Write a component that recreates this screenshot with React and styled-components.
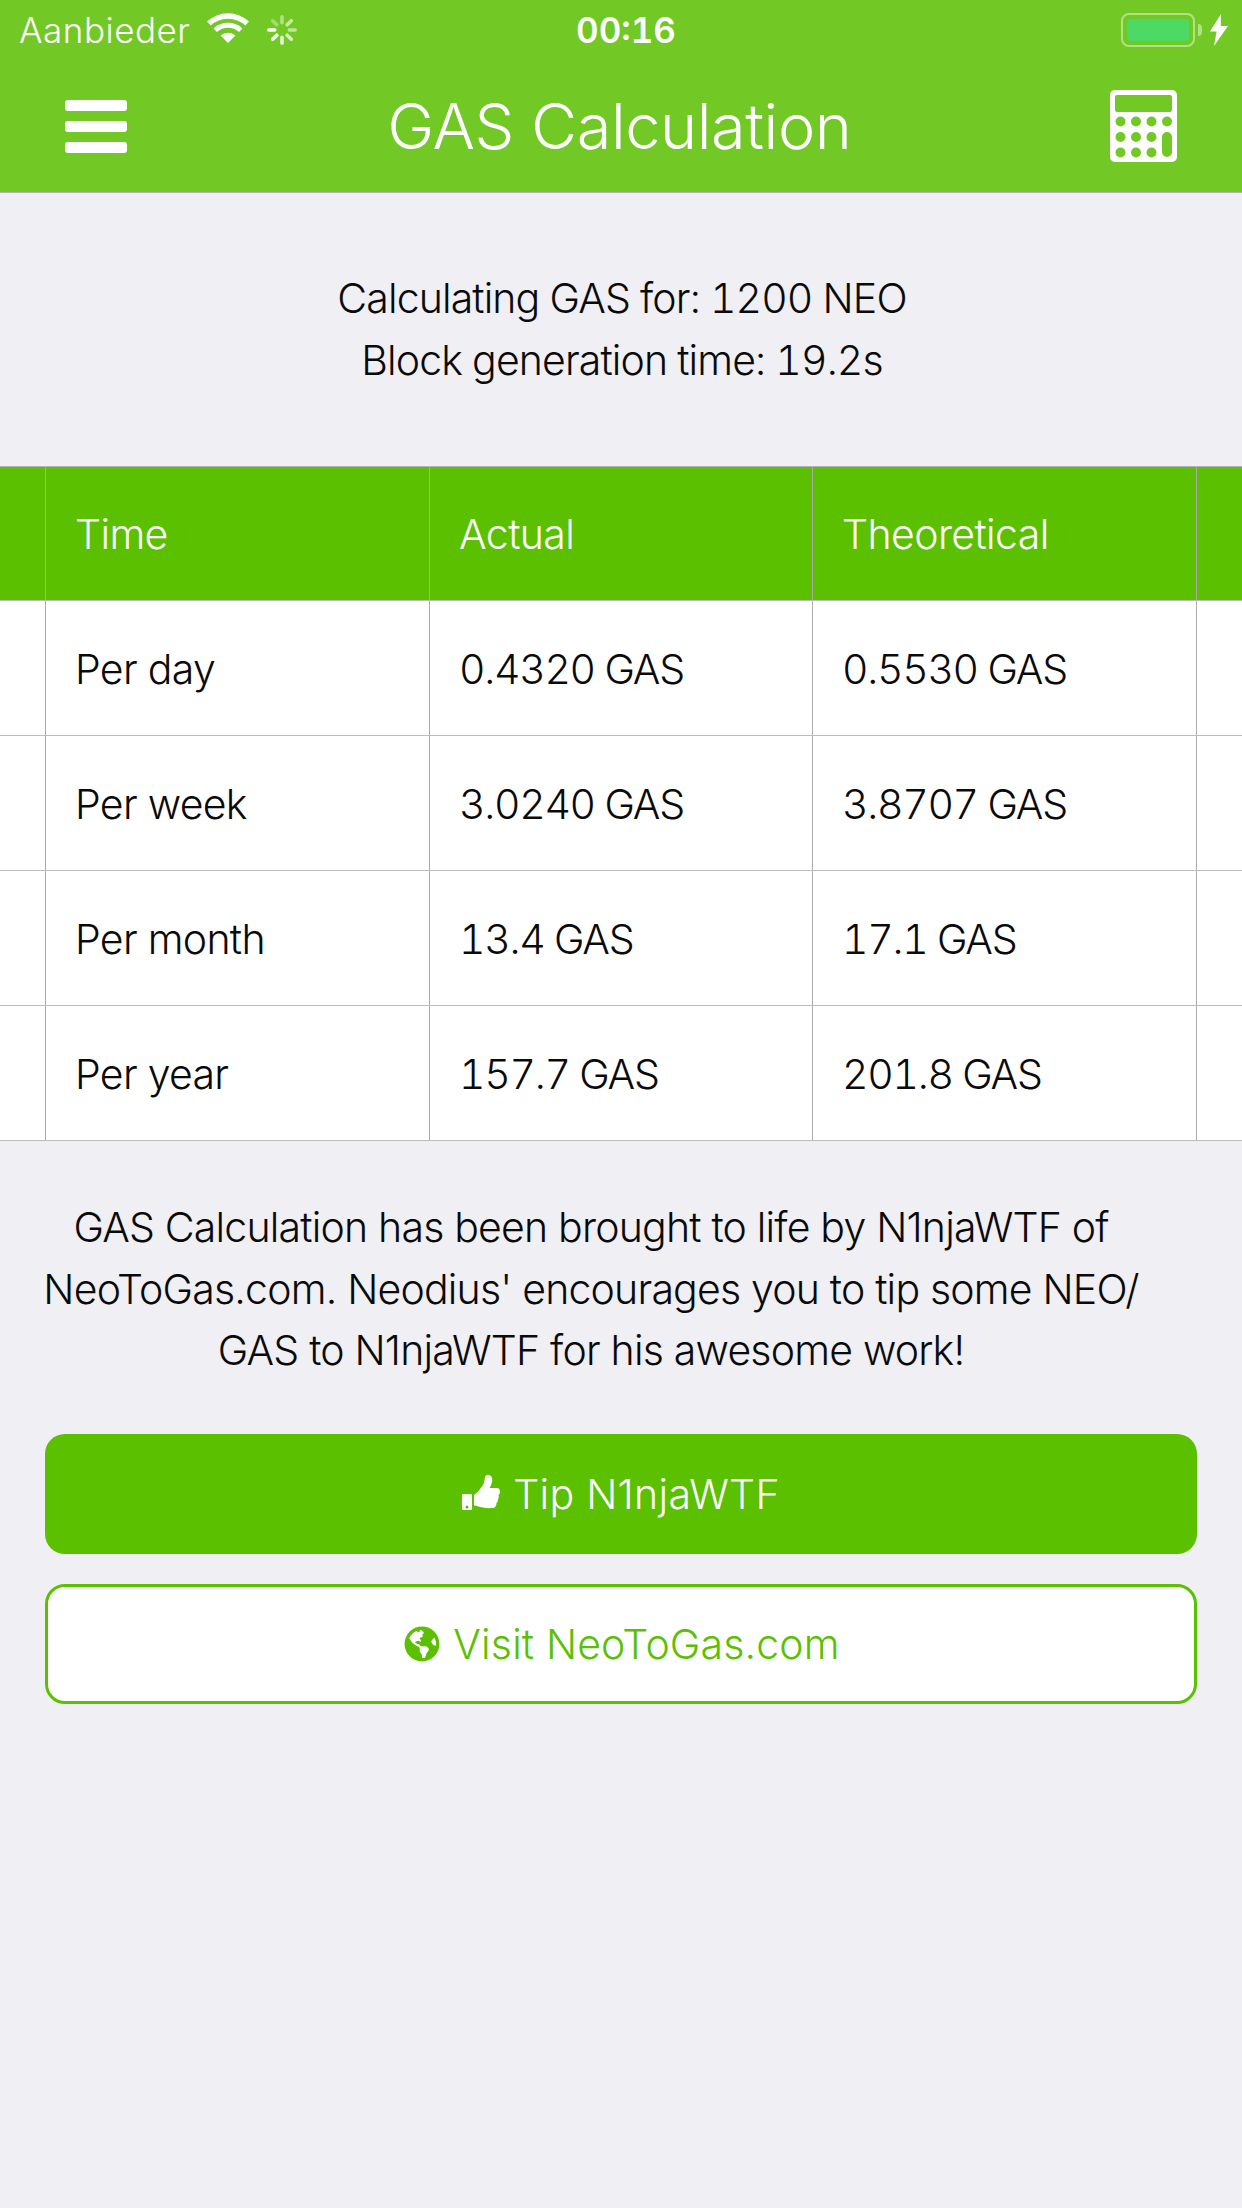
import React from 'react';
import styled, { createGlobalStyle } from 'styled-components';
import { FaGlobeAmericas } from 'react-icons/fa';

const rows = [
  ['Per day', '0.4320 GAS', '0.5530 GAS'],
  ['Per week', '3.0240 GAS', '3.8707 GAS'],
  ['Per month', '13.4 GAS', '17.1 GAS'],
  ['Per year', '157.7 GAS', '201.8 GAS'],
];

function App() {
  return (
    <Page>
      <GlobalStyle />
      <Header>
        <StatusBar>
          <StatusLeft>
            <Carrier>Aanbieder</Carrier>
            <WifiIcon />
            <Spinner />
          </StatusLeft>
          <Clock>00:16</Clock>
          <StatusRight>
            <Battery>
              <BatteryFill />
            </Battery>
            <BatteryCap />
            <BoltIcon />
          </StatusRight>
        </StatusBar>
        <NavBar>
          <BarsButton>
            <BarLine />
            <BarLine />
            <BarLine />
          </BarsButton>
          <Title>GAS Calculation</Title>
          <CalculatorIcon />
        </NavBar>
      </Header>

      <Intro>
        Calculating GAS for: 1200 NEO
        <br />
        Block generation time: 19.2s
      </Intro>

      <Table>
        <HeadRow>
          <HeadCell />
          <HeadCell>Time</HeadCell>
          <HeadCell>Actual</HeadCell>
          <HeadCell>Theoretical</HeadCell>
          <HeadCell />
        </HeadRow>
        {rows.map((row) => (
          <BodyRow key={row[0]}>
            <BodyCell />
            <BodyCell>{row[0]}</BodyCell>
            <BodyCell $numeric>{row[1]}</BodyCell>
            <BodyCell $numeric>{row[2]}</BodyCell>
            <BodyCell />
          </BodyRow>
        ))}
      </Table>

      <Credits>
        GAS Calculation has been brought to life by N1njaWTF of
        <br />
        NeoToGas.com. Neodius' encourages you to tip some NEO/
        <br />
        GAS to N1njaWTF for his awesome work!
      </Credits>

      <Buttons>
        <FilledButton>
          <ThumbIcon />
          Tip N1njaWTF
        </FilledButton>
        <OutlineButton>
          <FaGlobeAmericas size={36} />
          Visit NeoToGas.com
        </OutlineButton>
      </Buttons>
    </Page>
  );
}

const WifiIcon = () => (
  <WifiSvg viewBox="0 0 42 30">
    <path d="M21 30 13.6 22.6a11 11 0 0 1 14.8 0Z" />
    <path d="M9.9 18.9 6.6 15.4a21.5 21.5 0 0 1 28.8 0l-3.3 3.5a16.6 16.6 0 0 0-22.2 0Z" />
    <path d="M3.7 12.4 0 8.5a31 31 0 0 1 42 0l-3.7 3.9a25.8 25.8 0 0 0-34.6 0Z" />
  </WifiSvg>
);

const Spinner = () => (
  <SpinnerSvg viewBox="0 0 30 30">
    {[0, 45, 90, 135, 180, 225, 270, 315].map((angle, i) => (
      <rect
        key={angle}
        x="13.2"
        y="0"
        width="3.6"
        height="9.500"
        rx="1.8"
        fill="#fff"
        opacity={[0.45, 0.6, 0.55, 0.7, 0.8, 0.95, 1, 0.35][i]}
        transform={`rotate(${angle} 15 15)`}
      />
    ))}
  </SpinnerSvg>
);

const BoltIcon = () => (
  <BoltSvg viewBox="0 0 18 32">
    <path d="M11 0 0 17.5h6.6L4 32 18 12h-7.2Z" />
  </BoltSvg>
);

const CalculatorIcon = () => (
  <CalcSvg viewBox="0 0 67 72">
    <path
      fillRule="evenodd"
      d="M5 0h57a5 5 0 0 1 5 5v62a5 5 0 0 1-5 5H5a5 5 0 0 1-5-5V5a5 5 0 0 1 5-5Zm2 5a2 2 0 0 0-2 2v13a2 2 0 0 0 2 2h53a2 2 0 0 0 2-2V7a2 2 0 0 0-2-2Zm3.500 21.500a5 5 0 1 0 0 10 5 5 0 0 0 0-10Zm15.500 0a5 5 0 1 0 0 10 5 5 0 0 0 0-10Zm15.500 0a5 5 0 1 0 0 10 5 5 0 0 0 0-10Zm15.500 0a5 5 0 1 0 0 10 5 5 0 0 0 0-10ZM10.500 42a5 5 0 1 0 0 10 5 5 0 0 0 0-10ZM26 42a5 5 0 1 0 0 10 5 5 0 0 0 0-10Zm15.500 0a5 5 0 1 0 0 10 5 5 0 0 0 0-10Zm15.500 0a5 5 0 0 0-5 5v15a5 5 0 0 0 10 0V47a5 5 0 0 0-5-5ZM10.500 57.500a5 5 0 1 0 0 10 5 5 0 0 0 0-10Zm15.500 0a5 5 0 1 0 0 10 5 5 0 0 0 0-10Zm15.500 0a5 5 0 1 0 0 10 5 5 0 0 0 0-10Z"
    />
  </CalcSvg>
);

const ThumbIcon = () => (
  <ThumbSvg viewBox="0 0 38 37">
    <path
      fillRule="evenodd"
      d="M1 19h8a1 1 0 0 1 1 1v14a1 1 0 0 1-1 1H1a1 1 0 0 1-1-1V20a1 1 0 0 1 1-1Zm4 11.500a1.500 1.500 0 1 0 0 3 1.500 1.500 0 0 0 0-3Z"
    />
    <path d="M12 20c4-3 8-8 10-12 1-3 0-7 3-8 4-1 6 3 5 7-.500 3-2 5-2.500 6H35c2 0 3 2 3 3.500 0 1.500-.500 2.500-1.500 3.500.500 1.500.500 3-.500 4 0 2-.500 3-1.500 4 0 3-1.500 5-4 5-6 .500-11-.500-14-1.500-1-.500-3-1-4.500-1Z" />
  </ThumbSvg>
);

const GlobalStyle = createGlobalStyle`
  html, body {
    margin: 0;
    padding: 0;
    background: #efeff4;
  }
  * {
    box-sizing: border-box;
  }
`;

const Page = styled.div`
  width: 1242px;
  min-height: 2208px;
  background: #efeff4;
  color: #0a0a0a;
  font-family: Inter, "Liberation Sans", sans-serif;
  font-weight: 300;
`;

const Header = styled.header`
  height: 193px;
  background: #72c825;
  border-bottom: 1px solid #b2b2b2;
  color: #fff;
`;

const StatusBar = styled.div`
  height: 60px;
  padding: 0 12px 0 19px;
  display: grid;
  grid-template-columns: 1fr auto 1fr;
  align-items: center;
`;

const StatusLeft = styled.div`
  display: flex;
  align-items: center;
`;

const Carrier = styled.span`
  font-size: 35px;
  font-weight: 300;
  letter-spacing: 0.5px;
`;

const WifiSvg = styled.svg`
  width: 42px;
  height: 30px;
  margin-left: 17px;
  margin-top: -4px;
  fill: #fff;
`;

const SpinnerSvg = styled.svg`
  width: 30px;
  height: 30px;
  margin-left: 18px;
`;

const Clock = styled.span`
  font-size: 35px;
  font-weight: 600;
  font-variant-numeric: tabular-nums;
  margin-left: 3px;
`;

const StatusRight = styled.div`
  display: flex;
  align-items: center;
  justify-content: flex-end;
`;

const Battery = styled.div`
  width: 74px;
  height: 34px;
  padding: 4px;
  border: 2px solid rgba(255, 255, 255, 0.45);
  border-radius: 8px;
`;

const BatteryFill = styled.div`
  height: 100%;
  background: #4cd964;
  border-radius: 4px;
`;

const BatteryCap = styled.div`
  width: 4px;
  height: 12px;
  background: rgba(255, 255, 255, 0.45);
  border-radius: 0 4px 4px 0;
  margin-left: 3px;
`;

const BoltSvg = styled.svg`
  width: 18px;
  height: 32px;
  margin-left: 8px;
  margin-right: 2px;
  fill: #fff;
`;

const NavBar = styled.div`
  height: 132px;
  padding: 0 65px;
  display: flex;
  align-items: center;
  justify-content: space-between;
`;

const BarsButton = styled.div`
  width: 62px;
  display: flex;
  flex-direction: column;
  gap: 10px;
  margin-top: 1px;
`;

const BarLine = styled.span`
  height: 11px;
  background: #fff;
  border-radius: 3px;
`;

const Title = styled.h1`
  margin: 0 0 0 2px;
  font-size: 63px;
  font-weight: 300;
  letter-spacing: -0.4px;
`;

const CalcSvg = styled.svg`
  width: 67px;
  height: 72px;
  margin-top: -1px;
  fill: #fff;
`;

const Intro = styled.p`
  margin: 0;
  height: 273px;
  padding: 74px 0 0 2px;
  text-align: center;
  font-size: 41px;
  line-height: 62px;
  letter-spacing: -0.88px;
  font-variant-numeric: tabular-nums;
`;

const Table = styled.div`
  border-top: 1px solid #b2b2b2;
`;

const HeadRow = styled.div`
  display: grid;
  grid-template-columns: 46px 384px 383px 384px 1fr;
  height: 134px;
  background: #5ac000;
  color: #fff;
  border-bottom: 1px solid #bcbcbc;
`;

const BodyRow = styled.div`
  display: grid;
  grid-template-columns: 46px 384px 383px 384px 1fr;
  height: 135px;
  background: #fff;
  border-bottom: 1px solid #bcbcbc;
`;

const HeadCell = styled.div`
  display: flex;
  align-items: center;
  padding-left: 29px;
  padding-top: 1px;
  font-size: 41px;
  letter-spacing: -0.6px;
  border-right: 1px solid #aaaaaa;
  &:last-child {
    border-right: none;
  }
`;

const BodyCell = styled(HeadCell)`
  padding-top: 2px;
  letter-spacing: ${(props) => (props.$numeric ? '-1.3px' : '-0.7px')};
  font-variant-numeric: ${(props) => (props.$numeric ? 'tabular-nums' : 'normal')};
`;

const Credits = styled.p`
  margin: 0;
  width: 1182px;
  padding: 56px 0 0 0;
  text-align: center;
  font-size: 41px;
  line-height: 61.500px;
  letter-spacing: -0.8px;
  white-space: nowrap;
`;

const Buttons = styled.div`
  display: flex;
  flex-direction: column;
  gap: 30px;
  padding: 52px 45px 0;
`;

const FilledButton = styled.div`
  height: 120px;
  display: flex;
  align-items: center;
  justify-content: center;
  gap: 13px;
  font-size: 41px;
  letter-spacing: 0.3px;
  color: #fff;
  background: #5ac000;
  border-radius: 20px;
`;

const OutlineButton = styled(FilledButton)`
  color: #5ac000;
  background: #fff;
  border: 3px solid #5ac000;
  letter-spacing: 0.15px;
  padding-left: 2px;
`;

const ThumbSvg = styled.svg`
  width: 38px;
  height: 37px;
  fill: #fff;
`;

export default App;
